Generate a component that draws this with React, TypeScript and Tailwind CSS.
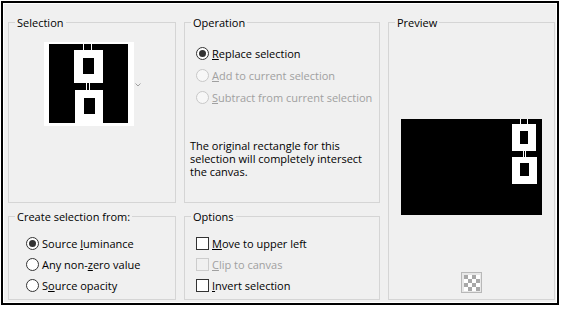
import type { ReactNode } from 'react';

const font = { fontFamily: '"Open Sans", "Liberation Sans", sans-serif' };

function Radio({ checked = false, disabled = false }: { checked?: boolean; disabled?: boolean }) {
    return (
        <span
            className={`w-[13px] h-[13px] rounded-full border flex items-center justify-center shrink-0 ${
                disabled ? 'border-[#c8c8c8] bg-[#f7f7f7]' : 'border-[#333333] bg-white'
            }`}
        >
            {checked && <span className="w-[7px] h-[7px] rounded-full bg-[#333333]" />}
        </span>
    );
}

function Check({ disabled = false }: { disabled?: boolean }) {
    return (
        <span
            className={`w-[13px] h-[13px] border shrink-0 ${
                disabled ? 'border-[#cccccc] bg-[#f0f0f0]' : 'border-[#333333] bg-white'
            }`}
        />
    );
}

function Row({ control, children, disabled = false, h = 'h-[22px]' }: { control: ReactNode; children: ReactNode; disabled?: boolean; h?: string }) {
    return (
        <div className={`flex items-center gap-[3px] ${h} ${disabled ? 'text-[#a0a0a0]' : 'text-black'}`}>
            {control}
            <span className="leading-[15px]">{children}</span>
        </div>
    );
}

function Group({ title, className = '', children }: { title: string; className?: string; children: ReactNode }) {
    return (
        <fieldset className={`border border-[#d5d5d5] min-w-0 ${className}`}>
            <legend className="ml-[6px] px-[2px] pt-[2px] leading-[14px] text-black">{title}</legend>
            {children}
        </fieldset>
    );
}

// small black/white mask thumbnail, drawn
function MaskThumb() {
    return (
        <svg width="90" height="84" viewBox="0 0 90 84" shapeRendering="crispEdges">
            <rect x="0" y="0" width="90" height="84" fill="#ffffff" />
            <rect x="5" y="2" width="79" height="79" fill="#000000" />
            <rect x="30" y="8" width="29" height="33" fill="#ffffff" />
            <rect x="39" y="16" width="11" height="16" fill="#000000" />
            <rect x="39" y="2" width="1" height="6" fill="#ffffff" />
            <rect x="47" y="2" width="1" height="6" fill="#ffffff" />
            <rect x="42" y="41" width="1" height="7" fill="#ffffff" />
            <rect x="45" y="41" width="1" height="7" fill="#ffffff" />
            <rect x="31" y="48" width="28" height="33" fill="#ffffff" />
            <rect x="40" y="56" width="11" height="16" fill="#000000" />
        </svg>
    );
}

function PreviewImage() {
    return (
        <svg width="141" height="96" viewBox="0 0 141 96" shapeRendering="crispEdges">
            <rect x="0" y="0" width="141" height="96" fill="#000000" />
            <rect x="111" y="5" width="24" height="27" fill="#ffffff" />
            <rect x="119" y="12" width="8" height="13" fill="#000000" />
            <rect x="119" y="0" width="1" height="5" fill="#ffffff" />
            <rect x="126" y="0" width="1" height="5" fill="#ffffff" />
            <rect x="122" y="32" width="1" height="6" fill="#ffffff" />
            <rect x="124" y="32" width="1" height="6" fill="#ffffff" />
            <rect x="111" y="38" width="25" height="27" fill="#ffffff" />
            <rect x="119" y="44" width="9" height="13" fill="#000000" />
        </svg>
    );
}

function Checker() {
    const cells = [];
    for (let r = 0; r < 4; r++) {
        for (let c = 0; c < 4; c++) {
            cells.push(
                <rect key={`${r}-${c}`} x={c * 4} y={r * 4} width="4" height="4" fill={(r + c) % 2 === 0 ? '#a8a8a8' : '#ffffff'} />
            );
        }
    }
    return (
        <div className="w-[21px] h-[21px] border border-[#b8b8b8] bg-[#e8e8e8] flex items-center justify-center">
            <svg width="16" height="16" viewBox="0 0 16 16" shapeRendering="crispEdges">
                {cells}
            </svg>
        </div>
    );
}

export default function App() {
    return (
        <div className="w-[563px] h-[310px] bg-white pt-[1px] pl-[1px] text-[11px]" style={font}>
            <div className="w-[558px] h-[304px] border-2 border-black">
                <div className="h-full border border-white bg-[#f0f0f0] pl-[4px] pt-[10px]">
                    <div className="grid grid-cols-[168px_196px_167px] grid-rows-[189px_92px] gap-x-2 gap-y-[5px]">
                        {/* Selection */}
                        <Group title="Selection">
                            <div className="flex items-center ml-[35px] mt-[12px]">
                                <MaskThumb />
                                <svg width="6" height="4" viewBox="0 0 6 4" className="ml-[1px] mt-[2px]">
                                    <path d="M0.5 0.5 L3 3 L5.5 0.5" fill="none" stroke="#a0a0a0" strokeWidth="1" />
                                </svg>
                            </div>
                        </Group>

                        {/* Operation */}
                        <Group title="Operation">
                            <div className="ml-[11px] mt-[12px]">
                                <Row control={<Radio checked />}>
                                    <span className="underline">R</span>eplace selection
                                </Row>
                                <Row control={<Radio disabled />} disabled>
                                    <span className="underline">A</span>dd to current selection
                                </Row>
                                <Row control={<Radio disabled />} disabled>
                                    <span className="underline">S</span>ubtract from current selection
                                </Row>
                            </div>
                            <p className="ml-[5px] mt-[31px] leading-[13px] text-black">
                                The original rectangle for this
                                <br />
                                selection will completely intersect
                                <br />
                                the canvas.
                            </p>
                        </Group>

                        {/* Preview */}
                        <Group title="Preview" className="row-span-2">
                            <div className="flex flex-col items-center">
                                <div className="mt-[89px]">
                                    <PreviewImage />
                                </div>
                                <div className="mt-[57px]">
                                    <Checker />
                                </div>
                            </div>
                        </Group>

                        {/* Create selection from */}
                        <Group title="Create selection from:">
                            <div className="ml-[17px] mt-[9px]">
                                <Row control={<Radio checked />} h="h-[21px]">
                                    Source <span className="underline">l</span>uminance
                                </Row>
                                <Row control={<Radio />} h="h-[21px]">
                                    Any non-<span className="underline">z</span>ero value
                                </Row>
                                <Row control={<Radio />} h="h-[21px]">
                                    S<span className="underline">o</span>urce opacity
                                </Row>
                            </div>
                        </Group>

                        {/* Options */}
                        <Group title="Options">
                            <div className="ml-[11px] mt-[9px]">
                                <Row control={<Check />} h="h-[21px]">
                                    <span className="underline">M</span>ove to upper left
                                </Row>
                                <Row control={<Check disabled />} disabled h="h-[21px]">
                                    <span className="underline">C</span>lip to canvas
                                </Row>
                                <Row control={<Check />} h="h-[21px]">
                                    <span className="underline">I</span>nvert selection
                                </Row>
                            </div>
                        </Group>
                    </div>
                </div>
            </div>
        </div>
    );
}
